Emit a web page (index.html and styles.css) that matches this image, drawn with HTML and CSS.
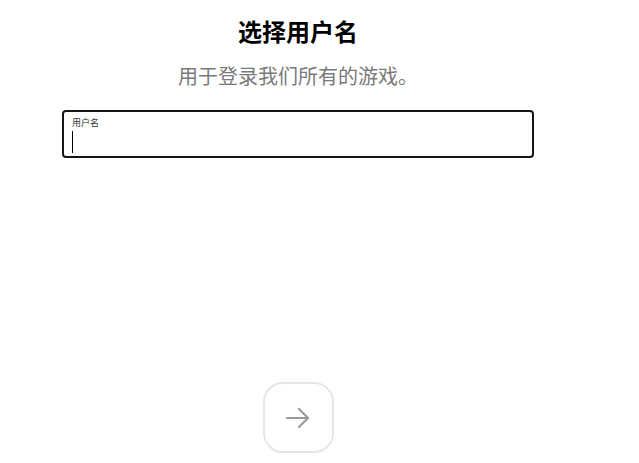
FILE: index.html
```html
<!DOCTYPE html>
<html lang="zh">
<head>
    <meta charset="UTF-8">
    <title>选择用户名</title>
    <link rel="stylesheet" href="styles.css">
</head>
<body>
    <div class="container">
        <h1>选择用户名</h1>
        <p class="subtitle">用于登录我们所有的游戏。</p>

        <div class="field">
            <div class="field-label">用户名</div>
            <span class="caret"></span>
        </div>

        <div class="actions">
            <button class="next-btn" aria-label="下一步">
                <svg width="26" height="26" viewBox="0 0 26 26" fill="none" stroke="#9a9a9a" stroke-width="2.2" stroke-linecap="round" stroke-linejoin="round">
                    <path d="M2 13h21"/>
                    <path d="M14 4l9 9-9 9"/>
                </svg>
            </button>
        </div>
    </div>
</body>
</html>
```

FILE: styles.css
```css
body {
    margin: 0;
    background: #fff;
    color: #000;
    font-family: "Noto Sans CJK SC", "Noto Sans", sans-serif;
}

.container {
    width: 472px;
    margin-left: 62px;
    display: flex;
    flex-direction: column;
    align-items: center;
}

h1 {
    margin: 14px 0 0;
    font-size: 24px;
    line-height: 34px;
    font-weight: 700;
}

.subtitle {
    margin: 14px 0 0;
    font-size: 20px;
    line-height: 28px;
    color: #7a7a7a;
}

.field {
    box-sizing: border-box;
    width: 100%;
    height: 48px;
    margin-top: 20px;
    border: 2px solid #151515;
    border-radius: 4px;
    padding: 5px 8px;
}

.field-label {
    font-size: 9px;
    line-height: 12px;
    color: #333;
}

.caret {
    display: block;
    width: 1px;
    height: 22px;
    margin-top: 2px;
    background: #000;
}

.actions {
    margin-top: 224px;
}

.next-btn {
    width: 71px;
    height: 71px;
    background: #fff;
    border: 2px solid #e6e6e6;
    border-radius: 20px;
    display: flex;
    align-items: center;
    justify-content: center;
    padding: 0;
}
```
